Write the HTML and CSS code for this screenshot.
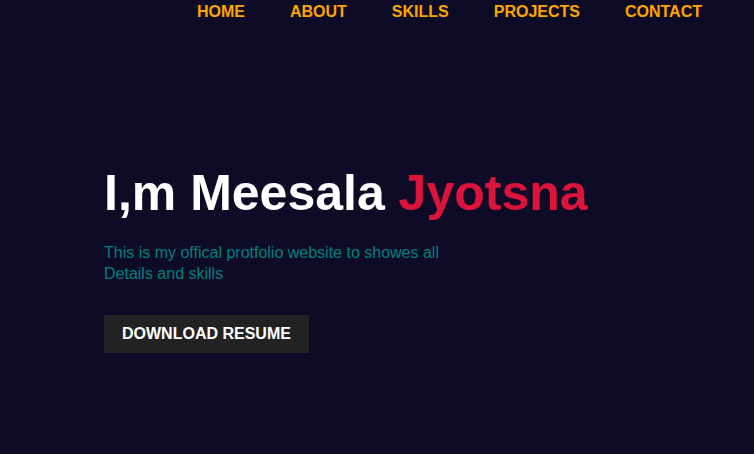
FILE: index.html
```html
<!DOCTYPE html>
<html lang="en">
<head>
<meta charset="utf-8">
<title>Meesala Jyotsna</title>
<link rel="stylesheet" href="styles.css">
</head>
<body>
<header class="nav">
  <a href="#" class="nav-link">HOME</a>
  <a href="#" class="nav-link">ABOUT</a>
  <a href="#" class="nav-link">SKILLS</a>
  <a href="#" class="nav-link">PROJECTS</a>
  <a href="#" class="nav-link">CONTACT</a>
</header>
<main class="hero">
  <h1 class="title">I,m Meesala <span class="accent">Jyotsna</span></h1>
  <p class="intro">This is my offical protfolio website to showes all Details and skills</p>
  <a href="#" class="btn">DOWNLOAD RESUME</a>
</main>
</body>
</html>
```
FILE: styles.css
```css
* { box-sizing: border-box; }
html, body { height: 100%; }
body {
  margin: 0;
  background: #0e0b26;
  font-family: "Liberation Sans", Arial, sans-serif;
}
.nav {
  display: flex;
  justify-content: flex-end;
  gap: 45px;
  padding: 3px 52px 0 0;
}
.nav-link {
  color: #ffa500;
  font-weight: bold;
  font-size: 16px;
  text-decoration: none;
  line-height: 18px;
}
.hero {
  padding: 144px 0 0 104px;
}
.title {
  margin: 0;
  font-size: 50px;
  font-weight: bold;
  color: #ffffff;
  line-height: 1.15;
}
.accent { color: #dc143c; }
.intro {
  margin: 19px 0 0;
  width: 350px;
  font-size: 16px;
  line-height: 21px;
  color: #008080;
}
.btn {
  display: inline-block;
  margin-top: 31px;
  padding: 10px 18px;
  background: #222222;
  color: #ffffff;
  font-weight: bold;
  font-size: 16px;
  line-height: 18px;
  text-decoration: none;
}
```
